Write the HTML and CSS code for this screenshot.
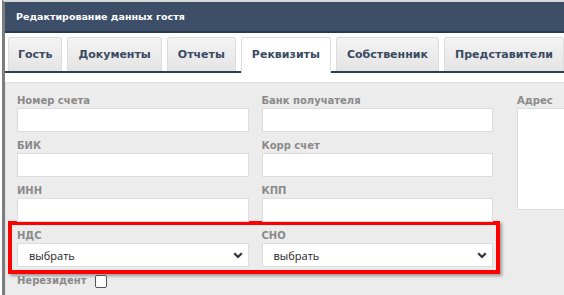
FILE: index.html
```html
<!DOCTYPE html>
<html lang="ru">
<head>
    <meta charset="UTF-8">
    <title>Редактирование данных гостя</title>
    <link rel="stylesheet" href="styles.css">
</head>
<body>
<div class="frame">
    <div class="dialog">
        <div class="titlebar">Редактирование данных гостя</div>

        <div class="tabs">
            <div class="tab">Гость</div>
            <div class="tab">Документы</div>
            <div class="tab">Отчеты</div>
            <div class="tab active">Реквизиты</div>
            <div class="tab">Собственник</div>
            <div class="tab">Представители</div>
        </div>

        <div class="panel">
            <div class="fields">
                <div class="row">
                    <div class="field">
                        <label>Номер счета</label>
                        <input type="text">
                    </div>
                    <div class="field">
                        <label>Банк получателя</label>
                        <input type="text">
                    </div>
                </div>
                <div class="row">
                    <div class="field">
                        <label>БИК</label>
                        <input type="text">
                    </div>
                    <div class="field">
                        <label>Корр счет</label>
                        <input type="text">
                    </div>
                </div>
                <div class="row">
                    <div class="field">
                        <label>ИНН</label>
                        <input type="text">
                    </div>
                    <div class="field">
                        <label>КПП</label>
                        <input type="text">
                    </div>
                </div>
                <div class="row highlight">
                    <div class="field">
                        <label>НДС</label>
                        <div class="select">
                            <span>выбрать</span>
                            <svg width="10" height="7" viewBox="0 0 10 7"><path d="M1.2 1.2 L5 5 L8.8 1.2" fill="none" stroke="#333" stroke-width="2.2"/></svg>
                        </div>
                    </div>
                    <div class="field">
                        <label>СНО</label>
                        <div class="select">
                            <span>выбрать</span>
                            <svg width="10" height="7" viewBox="0 0 10 7"><path d="M1.2 1.2 L5 5 L8.8 1.2" fill="none" stroke="#333" stroke-width="2.2"/></svg>
                        </div>
                    </div>
                </div>
                <div class="check-row">
                    <label>Нерезидент</label>
                    <span class="checkbox"></span>
                </div>
            </div>

            <div class="address">
                <label>Адрес</label>
                <div class="textarea"></div>
            </div>
        </div>
    </div>
</div>
</body>
</html>
```

FILE: styles.css
```css
:root {
    --header-bg: #3d4e69;
    --tab-text: #3a4a62;
    --label-color: #8a8a8a;
    --field-border: #dcdcdc;
    --panel-bg: #ececec;
}

html, body {
    height: 295px;
}

body {
    margin: 0;
    background-color: #fff;
    font-family: "DejaVu Sans", Verdana, sans-serif;
    overflow: hidden;
}

.frame {
    margin-left: 2px;
    border-left: 3px solid #7d7d7d;
    border-top: 2px solid #d8d8d8;
    height: 293px;
    overflow: hidden;
}

.dialog {
    background-color: #fff;
}

.titlebar {
    background-color: var(--header-bg);
    border-bottom: 2px solid #2b3950;
    height: 29px;
    line-height: 29px;
    padding-left: 11px;
    color: #fff;
    font-size: 9.5px;
    font-weight: bold;
}

.tabs {
    display: flex;
    gap: 5px;
    padding: 4px 0 0 3px;
    border-bottom: 2px solid #2f3d55;
    height: 34px;
}

.tab {
    height: 34px;
    line-height: 34px;
    padding: 0 10px;
    border: 1px solid #dcdcdc;
    border-bottom: none;
    border-radius: 3px 3px 0 0;
    background: linear-gradient(#f4f4f4, #e4e4e4);
    color: var(--tab-text);
    font-size: 11px;
    font-weight: bold;
    box-sizing: border-box;
    white-space: nowrap;
}

.tab:first-child {
    padding: 0 9px;
}

.tab.active {
    background: #fff;
    height: 36px;
    margin-bottom: -2px;
}

.panel {
    margin-top: 9px;
    background-color: var(--panel-bg);
    border-top: 1px solid #dedede;
    border-left: 1px solid #dedede;
    padding: 11px 0 20px 11px;
    display: flex;
    gap: 24px;
}

.fields {
    width: 476px;
    flex-shrink: 0;
}

.row {
    display: flex;
    gap: 13px;
    margin-bottom: 7px;
}

.field {
    flex: 1;
}

label {
    display: block;
    height: 14px;
    line-height: 14px;
    color: var(--label-color);
    font-size: 10px;
    font-weight: bold;
}

input[type="text"],
.select {
    display: block;
    width: 100%;
    height: 24px;
    box-sizing: border-box;
    border: 1px solid var(--field-border);
    background-color: #fff;
    margin: 0;
    outline: none;
}

.select {
    display: flex;
    align-items: center;
    justify-content: space-between;
    padding: 0 5px 0 11px;
    font-family: "Open Sans", sans-serif;
    font-size: 11px;
    color: #222;
}

.highlight {
    border: 4px solid #ff0000;
    margin: -8px -7px 0 -9px;
    padding: 4px 3px 3px 5px;
    box-shadow: 2px 2px 3px rgba(0, 0, 0, 0.35);
}

.check-row {
    display: flex;
    align-items: center;
    gap: 9px;
}

.checkbox {
    width: 10px;
    height: 11px;
    border: 1px solid #555;
    border-radius: 2px;
    background-color: #fff;
}

.address {
    flex: 1;
}

.address .textarea {
    height: 100px;
    border: 1px solid var(--field-border);
    border-right: none;
    background-color: #fff;
}
```
